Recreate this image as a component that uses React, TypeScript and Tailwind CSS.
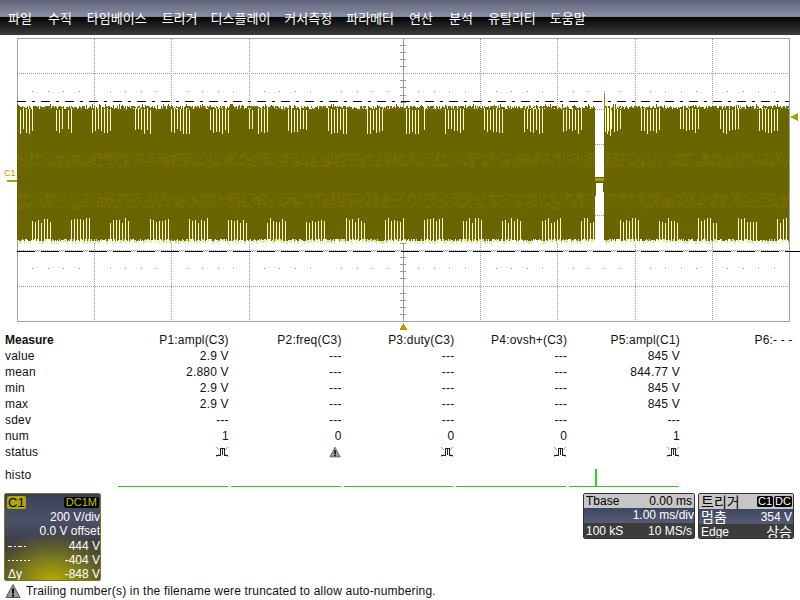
const menuItems = [
  { label: '파일', cls: 'ml-[8px]' },
  { label: '수직', cls: 'ml-[16px]' },
  { label: '타임베이스', cls: 'ml-[15px]' },
  { label: '트리거', cls: 'ml-[15px]' },
  { label: '디스플레이', cls: 'ml-[13px]' },
  { label: '커서측정', cls: 'ml-[14px]' },
  { label: '파라메터', cls: 'ml-[14px]' },
  { label: '연산', cls: 'ml-[15px]' },
  { label: '분석', cls: 'ml-[16px]' },
  { label: '유틸리티', cls: 'ml-[15px]' },
  { label: '도움말', cls: 'ml-[14px]' },
];

const PULSE = '@';
const WARN = '!';

const measureRows = [
  { label: 'value', cells: ['2.9 V', '---', '---', '---', '845 V', ''] },
  { label: 'mean', cells: ['2.880 V', '---', '---', '---', '844.77 V', ''] },
  { label: 'min', cells: ['2.9 V', '---', '---', '---', '845 V', ''] },
  { label: 'max', cells: ['2.9 V', '---', '---', '---', '845 V', ''] },
  { label: 'sdev', cells: ['---', '---', '---', '---', '---', ''] },
  { label: 'num', cells: ['1', '0', '0', '0', '1', ''] },
  { label: 'status', cells: [PULSE, WARN, PULSE, PULSE, PULSE, ''] },
];

const headers = ['P1:ampl(C3)', 'P2:freq(C3)', 'P3:duty(C3)', 'P4:ovsh+(C3)', 'P5:ampl(C1)', 'P6:- - -'];

// small repeatable noise so the trace looks the same on every run
let seed = 12345;
const rnd = () => {
  seed = (seed * 1664525 + 1013904223) % 4294967296;
  return seed / 4294967296;
};

const inGap = (x: number) => x >= 595 && x <= 603;

const buildTrace = () => {
  let body = '';
  let band = '';
  let edge = '';
  let spikes = '';
  let tips = '';
  for (let x = 17; x < 789; x++) {
    if (inGap(x)) continue;
    const top = rnd() < 0.14 ? 104 + Math.floor(rnd() * 3) : 106 + Math.floor(rnd() * 4);
    const bottom = 239 + Math.floor(rnd() * 3);
    body += `M${x + 0.5} ${top}V${bottom}`;
    if (rnd() < 0.55) edge += `M${x + 0.5} ${bottom}V${bottom + 3}`;
    if (rnd() < 0.6) tips += `M${x + 0.5} ${106 + Math.floor(rnd() * 4)}v2`;
  }
  for (let x = 17; x < 789; x += 2) {
    if (inGap(x) || inGap(x + 1)) continue;
    for (let y = 153; y < 208; y += 2) {
      if (y >= 167 && y < 192) continue;
      if (rnd() < 0.4) band += `M${x} ${y}h2v2h-2z`;
    }
  }
  // top bursts
  for (let k = 0; k < 20; k++) {
    const start = 14 + 39.2 * k;
    for (let i = 0; i < 7; i++) {
      const x = Math.round(start + i * 3);
      if (x < 18 || x > 787 || inGap(x)) continue;
      if (rnd() < 0.08) continue;
      spikes += `M${x + 0.5} ${108 + Math.floor(rnd() * 3)}V${129 + Math.floor(rnd() * 6)}`;
    }
  }
  // bottom bursts
  for (let k = 0; k < 20; k++) {
    const start = 32 + 39.2 * k;
    for (let i = 0; i < 7; i++) {
      const x = Math.round(start + i * 3);
      if (x < 18 || x > 787 || inGap(x)) continue;
      spikes += `M${x + 0.5} ${218 + Math.floor(rnd() * 6)}V243`;
    }
  }
  return { body, band, edge, spikes, tips };
};

const trace = buildTrace();

const vGrid = [1, 2, 3, 5, 6, 7, 8, 9].map((k) => 17 + 77.2 * k);
const hGrid = [73, 109, 144, 215, 250, 286];

const dots: number[] = [];
for (let k = 0; k < 10; k++) {
  for (let i = 1; i < 5; i++) dots.push(Math.round(17 + 77.2 * k + 15.44 * i));
}

const ticks: number[] = [];
for (let i = 1; i < 40; i++) {
  if (i % 5 !== 0) ticks.push(Math.round(38 + 7.07 * i));
}

const dashStarts: number[] = [];
for (let x = 17; x < 789; x += 24) dashStarts.push(x);

// Plot area: the svg's origin is the top of the page so numbers read as screen coordinates
const Scope = () => (
  <svg width={800} height={296} viewBox="0 35 800 296" className="block shrink-0" shapeRendering="crispEdges">
    {vGrid.map((x) => (
      <line key={x} x1={Math.round(x) + 0.5} x2={Math.round(x) + 0.5} y1={39} y2={321} stroke="#999" strokeDasharray="1 1" />
    ))}
    {hGrid.map((y) => (
      <line key={y} x1={19} x2={789} y1={y + 0.5} y2={y + 0.5} stroke="#999" strokeDasharray="1 1" />
    ))}
    {dots.map((x) => (
      <g key={x} fill="#999">
        <rect x={x} y={91} width={1} height={1} />
        <rect x={x} y={268} width={1} height={1} />
      </g>
    ))}
    <rect x={403} y={38} width={1} height={283} fill="#999" />
    {ticks.map((y) => (
      <rect key={y} x={400} y={y} width={6} height={1} fill="#999" />
    ))}

    <rect x={17} y={38} width={772} height={1} fill="#a0a0a0" />
    <rect x={17} y={321} width={772} height={1} fill="#a0a0a0" />
    <rect x={17} y={38} width={1} height={284} fill="#a0a0a0" />
    <rect x={789} y={38} width={1} height={284} fill="#a0a0a0" />

    {/* cursors */}
    <line x1={17} x2={789} y1={101.5} y2={101.5} stroke="#000" strokeDasharray="9 6 3 6" />
    {dashStarts.map((x) => (
      <g key={x}>
        <rect x={x} y={251} width={18} height={1} fill="#000" />
        <rect x={x + 19} y={251} width={1} height={1} fill="#aaa" />
        <rect x={x + 21} y={251} width={1} height={1} fill="#aaa" />
      </g>
    ))}

    {/* waveform */}
    <path d={trace.body} stroke="#6a6500" fill="none" />
    <path d={trace.tips} stroke="#7c7710" fill="none" />
    <path d={trace.edge} stroke="#e6e4a4" fill="none" />
    <path d={trace.band} fill="#746e00" />
    <path d={trace.spikes} stroke="#fafac8" fill="none" />
    <rect x={604} y={93} width={1} height={20} fill="#8d8820" />
    <path d="M607.5 100V134M610.5 103V136" stroke="#fafac8" fill="none" />
    <rect x={595} y={177} width={9} height={6} fill="#6a6500" />
    <rect x={595} y={178} width={9} height={3} fill="#a8a000" />
    <rect x={595} y={183} width={1} height={13} fill="#6a6500" />
    <rect x={603} y={183} width={1} height={9} fill="#6a6500" />

    {/* channel + trigger markers */}
    <text x={4} y={176} fontSize={9} fill="#a8a000" fontFamily="Liberation Sans, sans-serif" shapeRendering="auto">C1</text>
    <rect x={7} y={180} width={10} height={2} fill="#a8a000" />
    <polygon points="790,117 798,113 798,121" fill="#a8a000" />
    <polygon points="403.5,323 407.5,330 399.5,330" fill="#a8a000" />
  </svg>
);

const PulseIcon = () => (
  <svg width={12} height={12} viewBox="0 0 12 12" shapeRendering="crispEdges">
    <path d="M0 1l3 3M12 1l-3 3M0 11l3-3M12 11l-3-3" stroke="#999" fill="none" />
    <path d="M0 9.5H4V2.5H8V9.5H12" stroke="#222" fill="none" />
    <path d="M6.5 3V9" stroke="#222" fill="none" />
  </svg>
);

const WarnIcon = ({ size = 12 }: { size?: number }) => (
  <svg width={size} height={size} viewBox="0 0 16 16" className="shrink-0">
    <path d="M8 1.5L15 14.5H1Z" fill="#9a9a9a" stroke="#555" strokeLinejoin="round" />
    <path d="M8 5.5V10.5" stroke="#000" strokeWidth={2} />
    <rect x={7} y={11.5} width={2} height={2} fill="#000" />
  </svg>
);

const Cell = ({ value }: { value: string }) => {
  if (value === PULSE) return <div className="flex items-center justify-end pr-px"><PulseIcon /></div>;
  if (value === WARN) return <div className="flex items-center justify-end pr-px"><WarnIcon /></div>;
  return <div className="text-right">{value}</div>;
};

const MeasureTable = () => (
  <div className="mt-px shrink-0 pl-[5px] text-[12px] tracking-[0.2px] text-[#111]">
    <div className="grid h-4 grid-cols-[111px_repeat(6,112.8px)] items-center leading-4">
      <div className="font-bold tracking-normal">Measure</div>
      {headers.map((h) => (
        <div key={h} className="text-right">{h}</div>
      ))}
    </div>
    {measureRows.map((row) => (
      <div key={row.label} className="grid h-4 grid-cols-[111px_repeat(6,112.8px)] items-center leading-4">
        <div>{row.label}</div>
        {row.cells.map((c, i) => (
          <Cell key={i} value={c} />
        ))}
      </div>
    ))}
    <div className="grid h-[27px] grid-cols-[111px_repeat(6,112.8px)]">
      <div className="pt-[7px] leading-4">histo</div>
      {[0, 1, 2, 3, 4].map((i) => (
        <div key={i} className="relative ml-[2px] mr-px border-b border-[#2ec52e]">
          {i === 4 && <div className="absolute bottom-0 left-[26px] h-[17px] w-[2px] bg-[#22dd22]" />}
        </div>
      ))}
    </div>
  </div>
);

const ChannelPanel = () => (
  <div className="relative h-[88px] w-[97px] shrink-0 overflow-hidden rounded-[2px] border border-[#77762a] bg-[radial-gradient(ellipse_75%_55%_at_50%_100%,#b4ac00_0%,#7c7a20_45%,transparent_100%),linear-gradient(to_bottom,#3a4056_0%,#4a5068_30%,#3c3c40_60%,#2e2e2e_100%)] text-[12px] leading-[14px] text-white">
    <div className="flex h-4 items-center justify-between pl-[2px] pr-px">
      <div className="rounded-[2px] bg-[#b0a800] px-px text-[13px] leading-[13px] text-black">C1</div>
      <div className="rounded-[2px] bg-black px-[2px] text-[11px] leading-[11px] text-[#c8c000]">DC1M</div>
    </div>
    <div className="text-right">200 V/div</div>
    <div className="text-right">0.0 V offset</div>
    <div className="mt-px flex items-center justify-between pl-[3px]">
      <svg width={20} height={3} shapeRendering="crispEdges"><path d="M0 1.5H20" stroke="#fff" strokeDasharray="4 2 2 2" /></svg>
      <span>444 V</span>
    </div>
    <div className="flex items-center justify-between pl-[3px]">
      <svg width={22} height={3} shapeRendering="crispEdges"><path d="M0 1.5H22" stroke="#fff" strokeDasharray="2 2" /></svg>
      <span>-404 V</span>
    </div>
    <div className="flex items-center justify-between pl-[3px]">
      <span>Δy</span>
      <span>-848 V</span>
    </div>
  </div>
);

const TimebasePanel = () => (
  <div className="ml-[482px] h-[46px] w-[112px] shrink-0 overflow-hidden rounded-[2px] border border-[#333] text-[12px] leading-[14px] text-white">
    <div className="flex h-[14px] justify-between bg-[#c6c6c6] px-[2px] text-black">
      <span>Tbase</span>
      <span>0.00 ms</span>
    </div>
    <div className="h-[15px] bg-[linear-gradient(to_bottom,#3f4660,#565c72)] text-right">1.00 ms/div</div>
    <div className="flex h-[15px] justify-between bg-[#3c3c3c] px-[2px] pt-px">
      <span>100 kS</span>
      <span>10 MS/s</span>
    </div>
  </div>
);

const TriggerPanel = () => (
  <div className="ml-[3px] h-[46px] w-[96px] shrink-0 overflow-hidden rounded-[2px] border border-[#333] text-[12px] leading-[14px] text-white">
    <div className="flex h-[15px] items-center justify-between bg-[#c6c6c6] pl-[2px] pr-px text-[14px] text-black">
      <span>트리거</span>
      <span className="flex gap-px text-[11px] leading-[11px] text-white">
        <span className="rounded-[2px] bg-black px-px">C1</span>
        <span className="rounded-[2px] bg-black px-px">DC</span>
      </span>
    </div>
    <div className="flex h-[15px] items-center justify-between bg-[linear-gradient(to_bottom,#3f4660,#565c72)] pl-[2px] pr-px">
      <span className="text-[14px]">멈춤</span>
      <span>354 V</span>
    </div>
    <div className="flex h-[15px] items-center justify-between bg-[#3c3c3c] pl-[2px] pr-px">
      <span>Edge</span>
      <span className="text-[14px]">상승</span>
    </div>
  </div>
);

export default function App() {
  return (
    <div className="flex h-[600px] w-[800px] flex-col overflow-hidden bg-white font-['Liberation_Sans','Noto_Sans_CJK_KR',sans-serif]">
      {/* Menu bar */}
      <div className="flex h-[35px] shrink-0 items-center bg-[linear-gradient(to_bottom,#5f6379_0%,#8a8ea4_47%,#050505_49%,#3c3c3c_100%)] pt-px text-[13px] leading-none text-white">
        {menuItems.map((m) => (
          <span key={m.label} className={m.cls}>{m.label}</span>
        ))}
      </div>

      <Scope />
      <MeasureTable />

      {/* Channel and timebase boxes */}
      <div className="mt-[6px] flex h-[88px] shrink-0 items-start pl-1">
        <ChannelPanel />
        <TimebasePanel />
        <TriggerPanel />
      </div>

      {/* Status line */}
      <div className="mt-[2px] flex h-4 items-center pl-[5px] text-[12px] tracking-[0.19px] text-[#111]">
        <WarnIcon size={16} />
        <span className="ml-[5px]">Trailing number(s) in the filename were truncated to allow auto-numbering.</span>
      </div>
    </div>
  );
}
